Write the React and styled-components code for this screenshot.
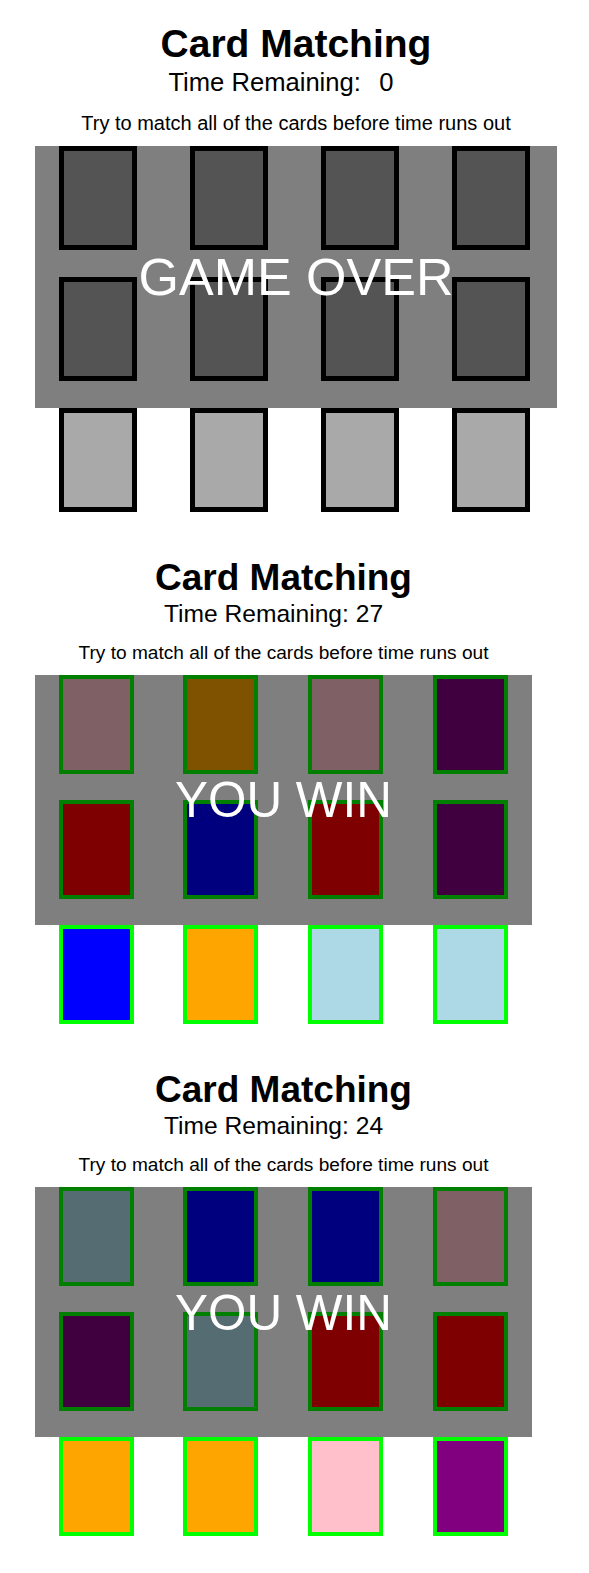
import React from "react";
import styled, { createGlobalStyle } from "styled-components";

const GlobalStyle = createGlobalStyle`
  html, body {
    margin: 0;
    padding: 0;
    background: #fff;
  }
  body {
    font-family: "Liberation Sans", Arial, sans-serif;
    color: #000;
  }
`;

const Page = styled.div`
  display: flex;
  flex-direction: column;
  padding-top: 24px;
`;

const Game = styled.section`
  display: flex;
  flex-direction: column;
  align-items: center;
  width: ${(p) => p.$width}px;
  margin: ${(p) => p.$top}px 0 0 35px;
`;

const Title = styled.h1`
  margin: 0;
  font-family: "Liberation Sans", Arial, sans-serif;
  font-weight: bold;
  font-size: ${(p) => p.$size}px;
  line-height: 1;
`;

const Timer = styled.div`
  margin-top: ${(p) => p.$gap}px;
  padding-right: ${(p) => p.$pad}px;
  font-family: "Liberation Sans", Arial, sans-serif;
  font-size: ${(p) => p.$size}px;
  line-height: 1;
  white-space: nowrap;
`;

const Seconds = styled.span`
  display: inline-block;
  min-width: 1em;
  text-align: right;
`;

const Hint = styled.p`
  margin: ${(p) => p.$gap}px 0 ${(p) => p.$after}px;
  font-family: "Liberation Sans", Arial, sans-serif;
  font-size: ${(p) => p.$size}px;
  line-height: 1;
  white-space: nowrap;
`;

const Board = styled.div`
  position: relative;
  align-self: stretch;
  display: grid;
  grid-template-columns: repeat(4, ${(p) => p.$cardW}px);
  grid-auto-rows: ${(p) => p.$cardH}px;
  column-gap: ${(p) => p.$colGap}px;
  row-gap: ${(p) => p.$rowGap}px;
  padding-left: 23.7px;
`;

const Card = styled.div`
  box-sizing: border-box;
  border: ${(p) => p.$border}px solid ${(p) => p.$edge};
  background: ${(p) => p.$face};
`;

const Overlay = styled.div`
  position: absolute;
  left: 0;
  top: 0;
  right: 0;
  height: ${(p) => p.$height}px;
  display: flex;
  align-items: center;
  justify-content: center;
  background: rgba(0, 0, 0, 0.5);
  color: #fff;
  font-family: "Liberation Sans", Arial, sans-serif;
  font-size: ${(p) => p.$size}px;
  line-height: 1;
  white-space: nowrap;
`;

const games = [
  {
    time: 0,
    message: "GAME OVER",
    top: 0,
    width: 522,
    title: 39,
    timer: 25.6,
    timerPad: 30,
    hint: 20,
    gaps: [6.8, 17.5, 13.6],
    card: { w: 78.5, h: 104, colGap: 52.5, rowGap: 26.6, border: 5 },
    banner: 52,
    edge: "#000",
    faces: Array(12).fill("#a9a9a9"),
  },
  {
    time: 27,
    message: "YOU WIN",
    top: 47,
    width: 497,
    title: 37,
    timer: 24.6,
    timerPad: 20,
    hint: 19.1,
    gaps: [6.3, 16.5, 13],
    card: { w: 75, h: 98.7, colGap: 49.8, rowGap: 26.3, border: 4.7 },
    banner: 49.4,
    edge: "#00ff00",
    faces: [
      "pink", "orange", "pink", "purple",
      "red", "blue", "red", "purple",
      "blue", "orange", "lightblue", "lightblue",
    ],
  },
  {
    time: 24,
    message: "YOU WIN",
    top: 47,
    width: 497,
    title: 37,
    timer: 24.6,
    timerPad: 20,
    hint: 19.1,
    gaps: [6.3, 16.5, 13],
    card: { w: 75, h: 98.7, colGap: 49.8, rowGap: 26.3, border: 4.7 },
    banner: 49.4,
    edge: "#00ff00",
    faces: [
      "lightblue", "blue", "blue", "pink",
      "purple", "lightblue", "red", "red",
      "orange", "orange", "pink", "purple",
    ],
  },
];

function MatchingGame({ game }) {
  const { card, gaps } = game;
  return (
    <Game $width={game.width} $top={game.top}>
      <Title $size={game.title}>Card Matching</Title>
      <Timer $size={game.timer} $gap={gaps[0]} $pad={game.timerPad}>
        Time Remaining: <Seconds>{game.time}</Seconds>
      </Timer>
      <Hint $size={game.hint} $gap={gaps[1]} $after={gaps[2]}>
        Try to match all of the cards before time runs out
      </Hint>
      <Board
        $cardW={card.w}
        $cardH={card.h}
        $colGap={card.colGap}
        $rowGap={card.rowGap}
      >
        {game.faces.map((face, i) => (
          <Card key={i} $face={face} $edge={game.edge} $border={card.border} />
        ))}
        <Overlay $height={2 * (card.h + card.rowGap)} $size={game.banner}>
          {game.message}
        </Overlay>
      </Board>
    </Game>
  );
}

export default function App() {
  return (
    <Page>
      <GlobalStyle />
      {games.map((game, i) => (
        <MatchingGame key={i} game={game} />
      ))}
    </Page>
  );
}
